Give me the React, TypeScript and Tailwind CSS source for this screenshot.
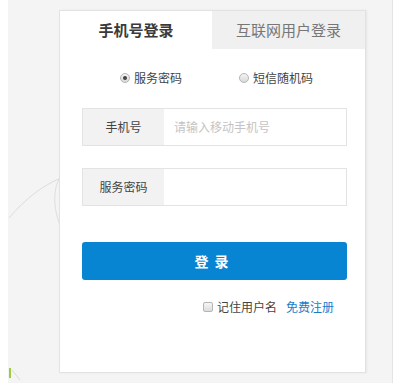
import React from 'react';

const font = { fontFamily: '"Noto Sans CJK SC", "Noto Sans", sans-serif' };

function Radio({ checked }: { checked?: boolean }) {
  return (
    <span className="flex h-[10px] w-[10px] items-center justify-center rounded-full border border-[#b5b5b5] bg-gradient-to-b from-[#f4f4f4] to-[#d9d9d9]">
      {checked ? <span className="h-[4px] w-[4px] rounded-full bg-[#444]" /> : null}
    </span>
  );
}

function Field({ label, placeholder }: { label: string; placeholder?: string }) {
  return (
    <div className="flex h-[38px] border border-[#e3e3e3] bg-white">
      <div className="flex w-[81px] items-center justify-center bg-[#f2f2f2] text-[12px] text-[#444]">
        {label}
      </div>
      <div className="flex flex-1 items-center pl-[10px] text-[12px] text-[#c4c4c4]">
        {placeholder}
      </div>
    </div>
  );
}

export default function App() {
  return (
    <div className="h-[390px] w-[413px] bg-white" style={font}>
      <div className="relative ml-[8px] h-[383px] w-[385px] border-r border-[#e4e4e4] bg-[#f4f4f4] pl-[51px] pt-[10px]">
        {/* background swirl */}
        <svg className="absolute left-0 top-0" width="60" height="383" viewBox="0 0 60 383" fill="none">
          <path d="M1 218 C 18 198, 36 184, 58 176" stroke="#dcdcdc" strokeWidth="1" />
          <path d="M58 172 C 44 180, 42 210, 58 238" stroke="#dedede" strokeWidth="1" />
          <path d="M2 368 L 2 378" stroke="#9ccc3c" strokeWidth="2" />
          <path d="M4 370 L 12 380" stroke="#dadada" strokeWidth="1" />
        </svg>

        <div className="relative h-[363px] w-[307px] border border-[#e2e2e2] bg-white shadow-[1px_0_2px_rgba(0,0,0,0.06)]">
          {/* tabs */}
          <div className="flex h-[38px]">
            <div className="flex w-[152px] items-center justify-center text-[15px] font-bold text-[#3a3a3a]">
              手机号登录
            </div>
            <div className="flex flex-1 items-center justify-center bg-[#f0f0f0] text-[15px] text-[#777]">
              互联网用户登录
            </div>
          </div>

          <div className="pl-[22px] pr-[18px] pt-[21px]">
            <div className="flex h-[16px] items-center justify-center gap-[57px] pl-[4px] text-[12px] text-[#444]">
              <label className="flex items-center gap-[4px]">
                <Radio checked />
                服务密码
              </label>
              <label className="flex items-center gap-[4px]">
                <Radio />
                短信随机码
              </label>
            </div>

            <div className="mt-[22px]">
              <Field label="手机号" placeholder="请输入移动手机号" />
            </div>
            <div className="mt-[22px]">
              <Field label="服务密码" />
            </div>

            <button className="mt-[36px] flex h-[38px] w-full items-center justify-center rounded-[3px] bg-[#0785d3] text-[14px] font-bold tracking-[6px] text-white">
              登录
            </button>

            <div className="mt-[19px] flex h-[16px] items-center justify-end gap-[9px] pr-[13px] text-[12px]">
              <label className="flex items-center gap-[4px] text-[#444]">
                <span className="h-[10px] w-[10px] rounded-[2px] border border-[#b5b5b5] bg-gradient-to-b from-[#f6f6f6] to-[#dcdcdc]" />
                记住用户名
              </label>
              <a className="text-[#1a7cc9]">免费注册</a>
            </div>
          </div>
        </div>
      </div>
    </div>
  );
}
